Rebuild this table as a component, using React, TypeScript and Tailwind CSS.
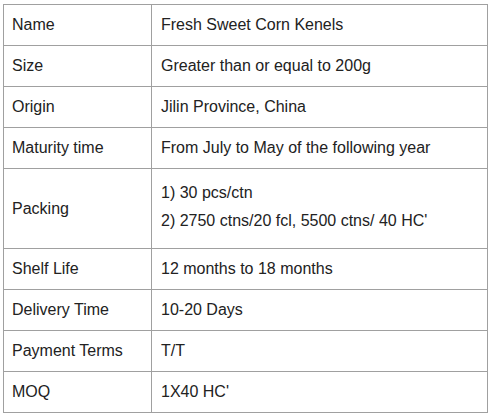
const ROWS: { label: string; value: string[] }[] = [
  { label: "Name", value: ["Fresh Sweet Corn Kenels"] },
  { label: "Size", value: ["Greater than or equal to 200g"] },
  { label: "Origin", value: ["Jilin Province, China"] },
  { label: "Maturity time", value: ["From July to May of the following year"] },
  { label: "Packing", value: ["1) 30 pcs/ctn", "2) 2750 ctns/20 fcl, 5500 ctns/ 40 HC'"] },
  { label: "Shelf Life", value: ["12 months to 18 months"] },
  { label: "Delivery Time", value: ["10-20 Days"] },
  { label: "Payment Terms", value: ["T/T"] },
  { label: "MOQ", value: ["1X40 HC'"] },
];

export default function App() {
  return (
    <div className="h-[420px] w-[495px] bg-white pl-[3px] pt-[4px] font-['Liberation_Sans',Arial,sans-serif] text-[16px] leading-[18px] text-[#222]">
      <table className="w-[485px] border-collapse">
        <tbody>
          {ROWS.map((row) => {
            const multi = row.value.length > 1;
            return (
              <tr key={row.label} className={multi ? "h-[80px]" : "h-[41px]"}>
                <td className="w-[148px] border border-[#a0a0a0] pl-[8px] align-middle">
                  {row.label}
                </td>
                <td className="border border-[#a0a0a0] pl-[9px] align-middle">
                  {multi ? (
                    <div className="flex flex-col gap-[10px] pb-[3px]">
                      {row.value.map((line) => (
                        <span key={line}>{line}</span>
                      ))}
                    </div>
                  ) : (
                    row.value[0]
                  )}
                </td>
              </tr>
            );
          })}
        </tbody>
      </table>
    </div>
  );
}
